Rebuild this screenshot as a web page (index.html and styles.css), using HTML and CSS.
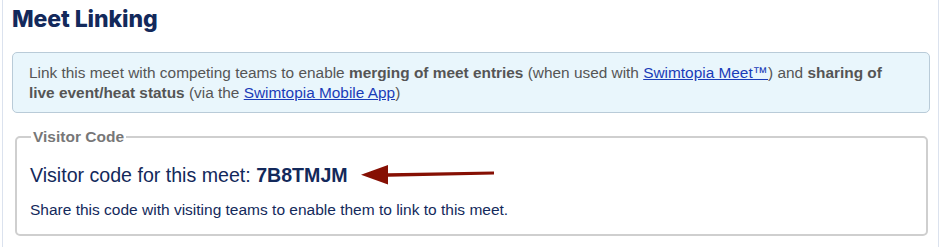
FILE: index.html
```html
<!DOCTYPE html>
<html>
<head>
<meta charset="utf-8">
<link rel="stylesheet" href="styles.css">
</head>
<body>
<div class="panel">
  <h1 class="title">Meet Linking</h1>
  <div class="info">
    Link this meet with competing teams to enable <b>merging of meet entries</b> (when used with <a href="#">Swimtopia Meet™</a>) and <b>sharing of live event/heat status</b> (via the <a href="#">Swimtopia Mobile App</a>)
  </div>
  <fieldset class="visitor">
    <legend>Visitor Code</legend>
    <div class="code-row">
      <span class="code-label">Visitor code for this meet: <b>7B8TMJM</b></span>
      <svg class="arrow" width="136" height="24" viewBox="0 0 136 24">
        <path d="M134 9.5 L28 11.3 L28 3 L1 12.8 L28 22.5 L28 14.7 L134 12.5 Z" fill="#860f03"/>
      </svg>
    </div>
    <p class="note">Share this code with visiting teams to enable them to link to this meet.</p>
  </fieldset>
</div>
</body>
</html>
```
FILE: styles.css
```css
html, body {
  margin: 0;
  padding: 0;
  background: #ffffff;
}
body {
  font-family: "Liberation Sans", Arial, sans-serif;
  width: 941px;
  height: 247px;
  overflow: hidden;
}
.panel {
  margin: 0 2px;
  border-left: 1px solid #dbe2ee;
  border-right: 1px solid #dbe2ee;
  padding: 0 8px 0 9px;
  height: 247px;
  box-sizing: border-box;
}
.title {
  margin: 0;
  padding-top: 5px;
  font-family: Inter, "Noto Sans", sans-serif;
  font-weight: 800;
  font-size: 23px;
  line-height: 28px;
  color: #13295b;
  letter-spacing: -0.1px;
}
.info {
  margin-top: 19px;
  background: #e9f6fc;
  border: 1px solid #b9cbd8;
  border-radius: 5px;
  padding: 10px 22px 9px 16px;
  font-size: 15.4px;
  line-height: 20px;
  color: #555555;
}
.info b {
  color: #555555;
}
.info a {
  color: #1a3cb8;
  text-decoration: underline;
}
.visitor {
  margin: 15px 2px 0 3px;
  border: 2px solid #cfcfcf;
  border-radius: 5px;
  padding: 15px 15px 14px 13px;
}
.visitor legend {
  font-size: 15.5px;
  line-height: 18px;
  font-weight: bold;
  color: #777777;
  padding: 0 2px;
  margin-left: 1px;
}
.code-row {
  display: flex;
  align-items: center;
  gap: 12px;
  height: 28px;
}
.code-label {
  font-size: 19.6px;
  color: #13295b;
}
.code-label b {
  color: #13295b;
}
.arrow {
  display: block;
  margin-top: -2px;
}
.note {
  margin: 11px 0 0 0;
  font-size: 15.5px;
  line-height: 20px;
  color: #13295b;
}
```
